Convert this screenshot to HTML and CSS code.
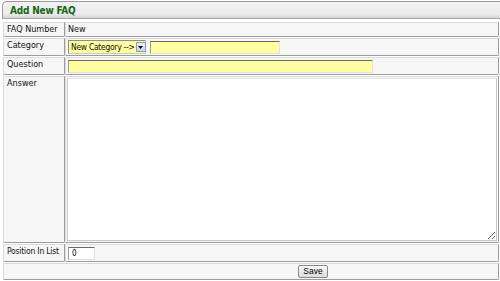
FILE: index.html
```html
<!DOCTYPE html>
<html lang="en">

<head>
    <meta charset="UTF-8">
    <title>Add New FAQ</title>
    <link rel="stylesheet" href="styles.css">
</head>

<body>
    <div class="painel">
        <div class="painel-topo">
            <h2>Add New FAQ</h2>
        </div>
        <table class="formulario">
            <tr>
                <td class="rotulo">FAQ Number</td>
                <td class="valor">New</td>
            </tr>
            <tr>
                <td class="rotulo">Category</td>
                <td class="valor">
                    <div class="linha">
                        <span class="combo">
                            <span class="combo-texto">New Category --&gt;</span>
                            <span class="combo-botao">
                                <svg width="5" height="3" viewBox="0 0 5 3"><path d="M0 0H5L2.5 3Z" fill="#000"/></svg>
                            </span>
                        </span>
                        <input type="text" class="campo amarelo campo-categoria">
                    </div>
                </td>
            </tr>
            <tr>
                <td class="rotulo">Question</td>
                <td class="valor">
                    <div class="linha">
                        <input type="text" class="campo amarelo campo-pergunta">
                    </div>
                </td>
            </tr>
            <tr>
                <td class="rotulo">Answer</td>
                <td class="valor">
                    <textarea class="resposta"></textarea>
                </td>
            </tr>
            <tr>
                <td class="rotulo apertado">Position In List</td>
                <td class="valor">
                    <div class="linha">
                        <input type="text" class="campo campo-posicao" value="0">
                    </div>
                </td>
            </tr>
            <tr>
                <td class="rodape" colspan="2">
                    <button class="salvar">Save</button>
                </td>
            </tr>
        </table>
    </div>
</body>

</html>
```

FILE: styles.css
```css
/* Estilos gerais */
body {
    margin: 0;
    padding: 0;
    background-color: #fff;
    font-family: "DejaVu Sans Condensed", "DejaVu Sans", sans-serif;
    font-size: 9px;
    color: #111;
}

.painel {
    padding: 1px 0 0 2px;
}

/* Barra de titulo */
.painel-topo {
    height: 16px;
    border-top: 1px solid #9a9a9a;
    border-left: 1px solid #9a9a9a;
    border-bottom: 1px solid #a8a8a8;
    border-radius: 5px 0 0 0;
    background: linear-gradient(#f2f2f2, #ebebeb 75%, #d6d6d6);
    padding-left: 7px;
}

.painel-topo h2 {
    margin: 0;
    font-size: 10px;
    letter-spacing: -0.2px;
    line-height: 17px;
    color: #146614;
    font-weight: bold;
}

/* Tabela do formulario */
table.formulario {
    margin: 2px 0 0 1px;
    width: 496px;
    table-layout: fixed;
    border-collapse: separate;
    border-spacing: 0 1px;
}

.formulario td {
    background-color: #f6f6f6;
    border: 1px solid;
    border-color: #dcdcdc #9c9c9c #9c9c9c #dcdcdc;
    border-radius: 0 0 2px 0;
    padding: 0;
    line-height: 13px;
    vertical-align: top;
}

.formulario td.rotulo {
    width: 57px;
    padding: 0 0 0 3px;
    white-space: nowrap;
}

.formulario td.apertado {
    font-size: 8.5px;
    letter-spacing: -0.2px;
}

.formulario td.valor {
    padding: 0 0 0 2px;
}

.linha {
    display: flex;
    align-items: center;
    height: 16px;
}

/* Campos */
.campo {
    box-sizing: border-box;
    height: 13px;
    border: 1px solid #e2e2e2;
    border-top-color: #6a6a6a;
    border-left-color: #9a9a9a;
    padding: 0 3px;
    font-family: inherit;
    font-size: 8px;
    margin: 0;
}

.amarelo {
    background-color: #ffffa0;
}

.campo-categoria {
    width: 130px;
    margin: 1px 0 0 4px;
}

.campo-pergunta {
    width: 305px;
}

.campo-posicao {
    width: 27px;
    background-color: #fff;
}

.combo {
    display: flex;
    box-sizing: border-box;
    height: 14px;
    width: 78px;
    border: 1px solid;
    border-color: #8c8c8c #c8c8c8 #c8c8c8 #8c8c8c;
    background-color: #ffffa0;
}

.combo-texto {
    flex: 1;
    padding-left: 2px;
    line-height: 12px;
    font-size: 8.5px;
    letter-spacing: -0.3px;
    white-space: nowrap;
}

.combo-botao {
    flex: none;
    width: 8px;
    margin: 1px;
    border: 1px solid #8a9ab8;
    background: linear-gradient(#e8eef8, #c8d4ea);
    display: flex;
    align-items: center;
    justify-content: center;
}

.resposta {
    display: block;
    box-sizing: border-box;
    width: 430px;
    height: 163px;
    margin: 1px 0 1px -1px;
    border: 1px solid #c8c8c8;
    border-top-color: #e4e4e4;
    background-color: #fff;
    resize: both;
}

.formulario td.rodape {
    padding: 1px 0 1px 294px;
}

.salvar {
    display: block;
    width: 30px;
    height: 13px;
    padding: 0;
    border: 1px solid #8a8a8a;
    border-radius: 2px;
    background: linear-gradient(#fafafa, #dcdcdc);
    font-family: "Liberation Sans", sans-serif;
    font-size: 8.5px;
    line-height: 11px;
    color: #000;
}
```
